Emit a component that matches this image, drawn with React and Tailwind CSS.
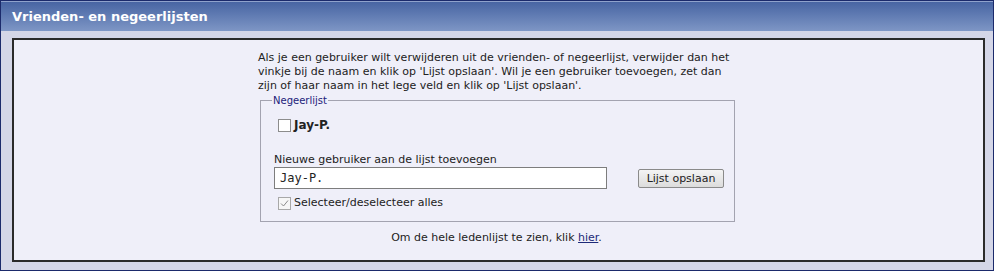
export default function App() {
  const font = { fontFamily: '"DejaVu Sans", Verdana, sans-serif' };
  return (
    <div className="w-[994px] h-[271px] border border-[#1b2a6b] bg-[#d4d6e7] flex flex-col" style={font}>
      <div className="h-[30px] shrink-0 border-t border-[#8fa2cc] bg-gradient-to-b from-[#4865a3] to-[#7e96c5] text-white font-bold text-[13px] pl-[11px] flex items-center">
        Vrienden- en negeerlijsten
      </div>
      <div className="pt-[7px] pl-[11px]">
        <div className="w-[973px] h-[224px] border-2 border-[#2a2a2a] bg-[#efeff9] text-[#222] text-[11px] leading-[14px]">
          <div className="ml-[244px] w-[477px] pt-[11px]">
            <p className="whitespace-nowrap">
              Als je een gebruiker wilt verwijderen uit de vrienden- of negeerlijst, verwijder dan het
              <br />
              vinkje bij de naam en klik op 'Lijst opslaan'. Wil je een gebruiker toevoegen, zet dan
              <br />
              zijn of haar naam in het lege veld en klik op 'Lijst opslaan'.
            </p>
            <fieldset className="mt-[1px] ml-[2px] w-[475px] border border-[#a3a3b0] pl-[13px] pr-[10px] pb-[11px]">
              <legend className="ml-[-2px] px-[1px] text-[#22227a] text-[10px] leading-[13px]">Negeerlijst</legend>
              <div className="mt-[11px] ml-[4px] flex items-center h-[14px]">
                <span className="w-[13px] h-[13px] border border-[#8c8c8c] bg-white mr-[3px]" />
                <span className="font-bold text-[12px]">Jay-P.</span>
              </div>
              <div className="mt-[21px]">Nieuwe gebruiker aan de lijst toevoegen</div>
              <div className="flex items-end">
                <div className="w-[333px] h-[22px] border border-[#7d7d7d] bg-white pl-[5px] flex items-center text-[12px] text-[#222]" style={{ fontFamily: '"DejaVu Sans Mono", monospace' }}>
                  Jay-P.
                </div>
                <button className="ml-[31px] w-[86px] h-[19px] mb-[1px] border border-[#8a8a8a] rounded-[2px] bg-gradient-to-b from-[#f4f4f4] to-[#dcdcdc] text-[11px] text-[#222] leading-none">
                  Lijst opslaan
                </button>
              </div>
              <div className="mt-[7px] ml-[4px] flex items-center h-[14px]">
                <span className="w-[13px] h-[13px] border border-[#a8a8a8] bg-[#f6f6f6] mr-[3px] flex items-center justify-center">
                  <svg width="11" height="11" viewBox="0 0 11 11">
                    <path d="M2 5.5 L4.5 8 L9 2.5" fill="none" stroke="#8a8a8a" strokeWidth="1" />
                  </svg>
                </span>
                <span>Selecteer/deselecteer alles</span>
              </div>
            </fieldset>
            <p className="mt-[9px] text-center">
              Om de hele ledenlijst te zien, klik <a className="text-[#1d2a78] underline">hier</a>.
            </p>
          </div>
        </div>
      </div>
    </div>
  );
}
